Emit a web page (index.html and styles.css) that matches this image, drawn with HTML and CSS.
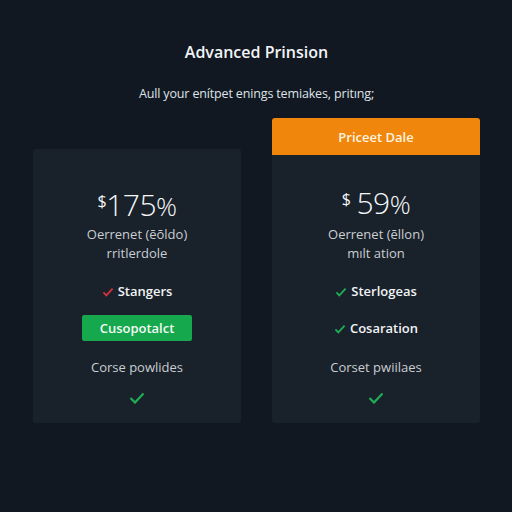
FILE: index.html
```html
<!DOCTYPE html>
<html>
<head>
<meta charset="utf-8">
<link rel="stylesheet" href="styles.css">
</head>
<body>
<div class="page">
  <h1 class="title">Advanced Prinsion</h1>
  <p class="subtitle">Aull your enítpet enings temiakes, pritıng;</p>
  <div class="plans">
    <div class="card card-left">
      <div class="price"><span class="cur">$</span>175<span class="pct">%</span></div>
      <p class="desc">Oerrenet (ēōldo)<br>rritlerdole</p>
      <div class="feature first"><svg class="chk" viewBox="0 0 14 12"><path d="M1.5 6.5 L5 10 L12.5 2" fill="none" stroke="#d9303f" stroke-width="2.2"/></svg>Stangers</div>
      <div class="btn">Cusopotalct</div>
      <p class="note">Corse powlides</p>
      <svg class="chk-big" viewBox="0 0 16 12"><path d="M1.5 6 L6 10.5 L14.5 1.5" fill="none" stroke="#1fae55" stroke-width="2.2"/></svg>
    </div>
    <div class="card card-right">
      <div class="card-head">Priceet Dale</div>
      <div class="card-body">
        <div class="price"><span class="cur cur-sp">$</span>59<span class="pct">%</span></div>
        <p class="desc desc-right">Oerrenet (ēllon)<br>mılt ation</p>
        <div class="feature first"><svg class="chk" viewBox="0 0 14 12"><path d="M1.5 6.5 L5 10 L12.5 2" fill="none" stroke="#1fae55" stroke-width="2.2"/></svg>Sterlogeas</div>
        <div class="feature second"><svg class="chk" viewBox="0 0 14 12"><path d="M1.5 6.5 L5 10 L12.5 2" fill="none" stroke="#1fae55" stroke-width="2.2"/></svg>Cosaration</div>
        <p class="note note-right">Corset pwiilaes</p>
        <svg class="chk-big" viewBox="0 0 16 12"><path d="M1.5 6 L6 10.5 L14.5 1.5" fill="none" stroke="#1fae55" stroke-width="2.2"/></svg>
      </div>
    </div>
  </div>
</div>
</body>
</html>
```
FILE: styles.css
```css
html, body {
  margin: 0;
  padding: 0;
  background: #111821;
}
body {
  width: 512px;
  height: 512px;
  font-family: "Open Sans", "Noto Sans", sans-serif;
  color: #e6e9ec;
}
.page {
  padding: 40px 32px 0 33px;
  display: flex;
  flex-direction: column;
  align-items: center;
}
.title {
  margin: 0;
  font-size: 16px;
  line-height: 24px;
  font-weight: 600;
  color: #f2f4f6;
}
.subtitle {
  margin: 21px 0 0;
  font-size: 12.5px;
  line-height: 18px;
  color: #dfe3e7;
  letter-spacing: -0.15px;
}
.plans {
  margin-top: 15px;
  width: 100%;
  display: flex;
  align-items: flex-end;
  gap: 31px;
}
.card {
  width: 208px;
  background: #19212a;
  border-radius: 3px;
  display: flex;
  flex-direction: column;
  align-items: center;
  box-sizing: border-box;
}
.card-left {
  height: 274px;
  padding-top: 36px;
}
.card-right {
  height: 305px;
}
.card-head {
  width: 100%;
  height: 37px;
  background: #f0860b;
  border-radius: 3px 3px 0 0;
  display: flex;
  align-items: center;
  justify-content: center;
  font-size: 13px;
  font-weight: 600;
  color: #fff4e2;
}
.card-body {
  padding-top: 28px;
  display: flex;
  flex-direction: column;
  align-items: center;
}
.price {
  font-size: 30px;
  line-height: 32px;
  font-weight: 300;
  color: #f4f6f8;
  letter-spacing: -0.5px;
}
.cur {
  font-size: 16px;
  vertical-align: 9px;
  font-weight: 400;
}
.cur-sp {
  margin-right: 6px;
}
.pct {
  font-size: 26px;
}
.desc {
  margin: 3px 0 0;
  font-size: 13px;
  line-height: 19px;
  text-align: center;
  color: #c9ced3;
}
.desc-right {
  margin-top: 5px;
}
.feature {
  display: flex;
  align-items: center;
  gap: 4px;
  font-size: 13px;
  line-height: 19px;
  font-weight: 600;
  color: #f1f3f5;
}
.feature.first {
  margin-top: 19px;
}
.feature.second {
  margin-top: 18px;
}
.chk {
  width: 12px;
  height: 10px;
}
.btn {
  margin-top: 14px;
  width: 110px;
  height: 26px;
  background: #15a84c;
  border-radius: 2px;
  display: flex;
  align-items: center;
  justify-content: center;
  font-size: 13px;
  font-weight: 600;
  color: #f4fbf6;
}
.note {
  margin: 17px 0 0;
  font-size: 13px;
  line-height: 19px;
  color: #c9ced3;
}
.note-right {
  margin-top: 20px;
}
.chk-big {
  margin-top: 15px;
  width: 16px;
  height: 12px;
}
```
